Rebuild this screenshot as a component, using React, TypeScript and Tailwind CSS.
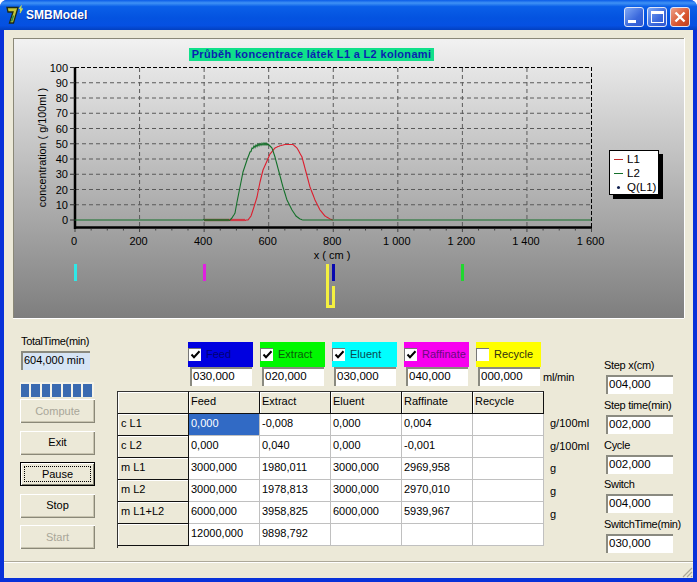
const FONT = "font-['Liberation_Sans',Arial,sans-serif]";

const FLOWS = [
  { name: 'Feed', color: 'bg-[#0000e0]', ink: 'text-[#000078]', value: '030,000', checked: true },
  { name: 'Extract', color: 'bg-[#00f800]', ink: 'text-[#0a5a0a]', value: '020,000', checked: true },
  { name: 'Eluent', color: 'bg-[#00ffff]', ink: 'text-[#0a4a50]', value: '030,000', checked: true },
  { name: 'Raffinate', color: 'bg-[#f800f0]', ink: 'text-[#6a0a80]', value: '040,000', checked: true },
  { name: 'Recycle', color: 'bg-[#ffff00]', ink: 'text-[#303010]', value: '000,000', checked: false },
];

const COLUMNS = ['', 'Feed', 'Extract', 'Eluent', 'Raffinate', 'Recycle'];
const ROWS = [
  ['c L1', '0,000', '-0,008', '0,000', '0,004', ''],
  ['c L2', '0,000', '0,040', '0,000', '-0,001', ''],
  ['m L1', '3000,000', '1980,011', '3000,000', '2969,958', ''],
  ['m L2', '3000,000', '1978,813', '3000,000', '2970,010', ''],
  ['m L1+L2', '6000,000', '3958,825', '6000,000', '5939,967', ''],
  ['', '12000,000', '9898,792', '', '', ''],
];

const STEPS = [
  { label: 'Step x(cm)', value: '004,000' },
  { label: 'Step time(min)', value: '002,000' },
  { label: 'Cycle', value: '002,000' },
  { label: 'Switch', value: '004,000' },
  { label: 'SwitchTime(min)', value: '030,000' },
];

const X0 = 75;
const XK = 516.5 / 1600;
const Y0 = 220;
const YK = 1.525;

// traced off the plot, in px
const L1_PTS: [number, number][] = [
  [248, 220], [251, 216], [253, 210], [257, 197], [260, 182], [263, 170], [267, 161], [270, 154], [275, 148],
  [280, 145.7], [285, 144.5], [293, 144.5], [297, 148], [302, 157], [306, 172], [310, 187], [315, 200], [320, 210],
  [325, 216], [330, 219], [333, 220],
];
const L2_PTS: [number, number][] = [
  [230, 220], [232, 218], [235, 213], [237, 202], [240, 187], [243, 172], [247, 160], [250, 152], [253, 147.5],
  [258, 145], [263, 144], [268, 144], [272, 148], [275, 157], [279, 172], [283, 187], [287, 200], [292, 210],
  [296, 216], [300, 219], [303, 220],
];

function interp(pts: [number, number][], x: number) {
  if (x <= pts[0][0]) return pts[0][1];
  for (let i = 1; i < pts.length; i++) {
    if (x <= pts[i][0]) {
      const [x1, y1] = pts[i - 1];
      const [x2, y2] = pts[i];
      return y1 + ((y2 - y1) * (x - x1)) / (x2 - x1);
    }
  }
  return pts[pts.length - 1][1];
}

function curve(from: number, to: number, fn: (x: number) => number) {
  const pts: string[] = [];
  for (let x = from; x <= to; x += 1) pts.push(`${x},${fn(x).toFixed(1)}`);
  return pts.join(' ');
}

function l1(x: number) {
  const noise = x < 246 ? (x % 2) * 1.2 - 0.6 : 0;
  return interp(L1_PTS, x) + noise;
}

function l2(x: number) {
  let jag = 0;
  if (x >= 204 && x < 230) jag = (x % 2) * 1.2 - 0.6;
  if (x > 250 && x < 268) jag = (x % 2) * 2 - 1;
  return interp(L2_PTS, x) + jag;
}

function Chart() {
  const xticks = [0, 200, 400, 600, 800, 1000, 1200, 1400, 1600];
  const xlabels = ['0', '200', '400', '600', '800', '1 000', '1 200', '1 400', '1 600'];
  const yticks = [0, 10, 20, 30, 40, 50, 60, 70, 80, 90, 100];
  return (
    <svg width="671" height="280" viewBox="13 38 671 280" className="block" fontFamily="Liberation Sans, Arial, sans-serif">
      {yticks.slice(1, -1).map((v) => (
        <line key={v} x1={X0} x2={591} y1={Y0 - v * YK} y2={Y0 - v * YK} stroke="#5a5a5a" strokeDasharray="4 3" />
      ))}
      {xticks.slice(1, -1).map((v) => (
        <line key={v} x1={X0 + v * XK} x2={X0 + v * XK} y1={68} y2={227} stroke="#5a5a5a" strokeDasharray="4 3" />
      ))}
      <line x1={75} x2={591} y1={67.5} y2={67.5} stroke="#000" strokeDasharray="4 2" />
      <line x1={591.5} x2={591.5} y1={67} y2={228} stroke="#000" strokeDasharray="4 2" />
      <line x1={75} x2={75} y1={67} y2={229} stroke="#000" strokeWidth="2.5" />
      <line x1={74} x2={592} y1={227.5} y2={227.5} stroke="#000" strokeWidth="2.5" />
      {Array.from({ length: 33 }).map((_, i) => (
        <line key={i} x1={X0 + i * 50 * XK} x2={X0 + i * 50 * XK} y1={229} y2={i % 4 === 0 ? 232 : 230.5} stroke="#444" />
      ))}
      {yticks.map((v) => (
        <line key={v} x1={70} x2={75} y1={Y0 - v * YK} y2={Y0 - v * YK} stroke="#333" />
      ))}

      <polyline points={curve(204, 333, l1)} fill="none" stroke="#dc1e2e" strokeWidth="1.1" />
      <polyline points={curve(75, 591, l2)} fill="none" stroke="#14702a" strokeWidth="1.1" />

      {yticks.map((v) => (
        <text key={v} x={68} y={Y0 - v * YK + 4} textAnchor="end" fontSize="11" fill="#000">{v}</text>
      ))}
      {xticks.map((v, i) => (
        <text key={v} x={X0 + v * XK - 1} y={245} textAnchor="middle" fontSize="11" fill="#000">{xlabels[i]}</text>
      ))}
      <text x={332} y={259} textAnchor="middle" fontSize="11" fill="#000">x ( cm )</text>
      <text transform="translate(46 147.5) rotate(-90)" textAnchor="middle" fontSize="10.8" fill="#000">concentration ( g/100ml )</text>

      <rect x={74} y={264} width={3} height={17} fill="#30e8e8" />
      <rect x={203} y={264} width={3} height={17} fill="#e020e0" />
      <rect x={461} y={264} width={3} height={17} fill="#20d830" />
      <rect x={332} y={264} width={3} height={17} fill="#0808b0" />
      <path d="M327.5 264V306.5H333.5V286" fill="none" stroke="#f4f040" strokeWidth="3" />
    </svg>
  );
}

function Sunken({ value, className }: { value: string; className: string }) {
  return (
    <div className={`${className} h-[19px] border-t-2 border-l-2 border-t-[#8a8a80] border-l-[#8a8a80] bg-white px-px leading-[15px] text-[11.5px] whitespace-nowrap`}>
      {value}
    </div>
  );
}

function Button({ label, disabled, focused }: { label: string; disabled?: boolean; focused?: boolean }) {
  const edge = focused
    ? 'border border-black shadow-[inset_1px_1px_0_#fff,inset_-1px_-1px_0_#808070]'
    : 'shadow-[inset_1px_1px_0_#fff,inset_-1px_-1px_0_#8a8878,inset_-2px_-2px_0_#c8c4b0]';
  return (
    <div className={`flex h-[24px] w-[75px] items-center justify-center bg-[#ece9d8] p-[3px] ${edge} ${disabled ? 'text-[#a8a698]' : 'text-black'}`}>
      <span className={`flex h-full w-full items-center justify-center ${focused ? 'border border-dotted border-black' : ''}`}>{label}</span>
    </div>
  );
}

function FlowBox({ name, color, ink, value, checked }: { name: string; color: string; ink: string; value: string; checked: boolean }) {
  return (
    <div className="w-[65px]">
      <div className={`${color} ${ink} flex h-[25px] items-center gap-[5px] pb-px text-[11px]`}>
        <span className="flex h-[13px] w-[13px] shrink-0 items-center justify-center border-t border-l border-t-[#777] border-l-[#777] bg-white">
          {checked && (
            <svg width="11" height="11" viewBox="0 0 11 11">
              <path d="M1.5 5.5 4 8.2 9.5 2.2" fill="none" stroke="#000" strokeWidth="2" />
            </svg>
          )}
        </span>
        <span>{name}</span>
      </div>
      <Sunken value={value} className="ml-[2px] w-[62px]" />
    </div>
  );
}

function Table() {
  return (
    <div className="w-[428px] border-l border-[#333] bg-[#ece9d8] pb-[2px]">
      <div className="flex h-[23px]">
        {COLUMNS.map((c, i) => (
          <div key={i} className="w-[71px] border-r border-b border-t border-[#111] border-t-[#333] pl-[2px] pt-[1px] shadow-[inset_1px_1px_0_#fff]">{c}</div>
        ))}
      </div>
      {ROWS.map((row, r) => (
        <div key={r} className="flex h-[22px]">
          {row.map((cell, i) => {
            if (i === 0) {
              return (
                <div key={i} className="w-[71px] border-r border-b border-[#111] pl-[3px] pt-[1px] shadow-[inset_1px_1px_0_#fff]">{cell}</div>
              );
            }
            const selected = r === 0 && i === 1;
            return (
              <div key={i} className={`w-[71px] border-r border-b border-[#c0c0c0] pl-[2px] pt-[1px] ${selected ? 'bg-[#316ac5] text-white' : 'bg-white'}`}>{cell}</div>
            );
          })}
        </div>
      ))}
    </div>
  );
}

function WindowButtons() {
  const base = 'flex h-[20px] w-[20px] rounded-[3px] border border-[#dfe6f8]';
  return (
    <div className="ml-auto mt-[4px] flex gap-[3px] pr-[7px]">
      <div className={`${base} items-end bg-[linear-gradient(135deg,#7fa8f5,#3a68dc_60%,#2f58d0)] pb-[3px] pl-[3px]`}>
        <div className="h-[3px] w-[8px] bg-white" />
      </div>
      <div className={`${base} items-center justify-center bg-[linear-gradient(135deg,#7fa8f5,#3a68dc_60%,#2f58d0)]`}>
        <div className="h-[12px] w-[13px] border border-t-[3px] border-white" />
      </div>
      <div className={`${base} items-center justify-center bg-[linear-gradient(135deg,#eda08a,#d8552f_60%,#c04020)]`}>
        <svg width="12" height="12" viewBox="0 0 12 12">
          <path d="M1.5 1.5 10.5 10.5M10.5 1.5 1.5 10.5" stroke="#fff" strokeWidth="2.4" />
        </svg>
      </div>
    </div>
  );
}

export default function App() {
  return (
    <div className={`${FONT} flex h-[582px] w-[697px] flex-col overflow-hidden rounded-t-[7px] bg-[#0831d9] text-[11px] text-black`}>
      <div className="flex h-[30px] shrink-0 items-center bg-[linear-gradient(180deg,#0a5be8_0%,#3f92f5_10%,#0a5fe8_22%,#0453e0_60%,#0550e2_85%,#0340c0_100%)] pl-[6px]">
        <svg width="18" height="20" viewBox="0 0 18 20">
          <path d="M1 2.5H12L7.5 18H3.5L7 7H2Z" fill="#c4c63a" stroke="#1c2a18" strokeWidth="1.3" />
          <path d="M5.5 16.5 7.5 10.5" stroke="#2c8a4a" strokeWidth="1.6" />
          <path d="M13 4 15 1.5 14.5 5 16.5 3.5 14 8" fill="none" stroke="#cfe04a" strokeWidth="1.1" />
        </svg>
        <span className="ml-[2px] text-[12px] font-bold text-white [text-shadow:1px_1px_0_#0a2a90]">SMBModel</span>
        <WindowButtons />
      </div>
      <div className="mx-[4px] mb-[4px] flex flex-1 flex-col bg-[#ece9d8]">
        <div className="flex-1">
          <div className="relative ml-[9px] mt-[8px] h-[280px] w-[671px] overflow-hidden bg-[linear-gradient(180deg,#f2f2f2_0%,#7e7e7e_100%)] shadow-[inset_1px_1px_0_#8a8878,0_1px_0_#fff,1px_0_0_#fff]">
            <Chart />
            <div className="absolute left-[176px] top-[10px] h-[13px] w-[245px] bg-[#10e08a] text-center text-[11px] font-bold leading-[13px] tracking-[0.33px] text-[#0a1fb0]">
              Průběh koncentrace látek L1 a L2 kolonami
            </div>
            <div className="absolute left-[596px] top-[112px] h-[45px] w-[50px] border border-black bg-white pl-[4px] pt-[1px] text-[11.5px] leading-[14px] shadow-[4px_4px_0_#000]">
              <div className="flex items-center gap-[4px]"><span className="h-px w-[9px] shrink-0 bg-[#c02a2a]" />L1</div>
              <div className="flex items-center gap-[4px]"><span className="h-px w-[9px] shrink-0 bg-[#14702a]" />L2</div>
              <div className="flex items-center gap-[4px]">
                <span className="flex w-[9px] shrink-0 justify-center"><span className="h-[3px] w-[3px] rounded-full bg-[#102050]" /></span>Q(L1)
              </div>
            </div>
          </div>
          <div className="flex">
            <div className="ml-[16px] w-[76px]">
              <div className="ml-px mb-[2px] mt-[16px] h-[15px] whitespace-nowrap leading-[15px] tracking-[-0.3px]">TotalTime(min)</div>
              <div className="ml-px h-[19px] w-[69px] whitespace-nowrap border-t-2 border-l-2 border-t-[#8a8a80] border-l-[#8a8a80] bg-[#d6e4f5] px-px leading-[15px]">604,000 min</div>
              <div className="mt-[12px] flex h-[15px] w-[74px] gap-[2px] bg-[#f5f3e8] pl-px pt-[2px]">
                {Array.from({ length: 7 }).map((_, i) => (
                  <div key={i} className="h-[13px] w-[8.4px] bg-[#3a6ab0]" />
                ))}
              </div>
              <div className="mt-[2px] flex flex-col gap-[7.5px]">
                <Button label="Compute" disabled />
                <Button label="Exit" />
                <Button label="Pause" focused />
                <Button label="Stop" />
                <Button label="Start" disabled />
              </div>
            </div>
            <div className="ml-[21px] w-[487px]">
              <div className="ml-[71px] mt-[24px] flex h-[44px] items-end">
                <div className="flex gap-[7px]">
                  {FLOWS.map((f) => (
                    <FlowBox key={f.name} {...f} />
                  ))}
                </div>
                <span className="mb-[1px] ml-[2px] tracking-[-0.2px]">ml/min</span>
              </div>
              <div className="mt-[5px] flex">
                <Table />
                <div className="ml-[5px] pt-[21px]">
                  {['g/100ml', 'g/100ml', 'g', 'g', 'g'].map((u, i) => (
                    <div key={i} className="flex h-[22.7px] items-center">{u}</div>
                  ))}
                </div>
              </div>
            </div>
            <div className="mt-[40px] w-[80px]">
              {STEPS.map((s) => (
                <div key={s.label} className="h-[39.75px]">
                  <div className="h-[17px] whitespace-nowrap leading-[15px] tracking-[-0.3px]">{s.label}</div>
                  <Sunken value={s.value} className="ml-[2px] w-[67px]" />
                </div>
              ))}
            </div>
          </div>
        </div>
        <div className="relative h-[17px] shrink-0 border-t border-t-[#aca899] shadow-[inset_0_1px_0_#fff]">
          <svg width="12" height="12" viewBox="0 0 12 12" className="absolute bottom-0 right-0">
            <path d="M11 2 2 11M11 6 6 11M11 10 10 11" stroke="#aca899" strokeWidth="1.2" />
          </svg>
        </div>
      </div>
    </div>
  );
}
